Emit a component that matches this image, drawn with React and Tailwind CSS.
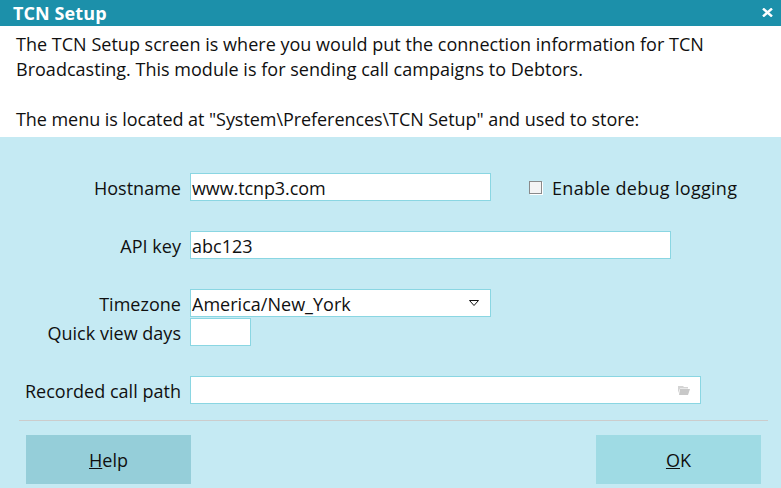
import React from 'react';

function Field({ label, className = '', children }) {
  return (
    <div className={`flex items-center ${className}`}>
      <label className="w-[181px] text-right mr-[9px] pt-[2px] text-[#101010]">{label}</label>
      {children}
    </div>
  );
}

const boxClass = 'h-[28px] bg-white border border-[#8ad6e2] flex items-center pl-[1px] pr-[2px] pt-[2px] text-[#101010]';

export default function App() {
  return (
    <div className="w-[781px] h-[488px] overflow-hidden flex flex-col bg-[#c5eaf3] text-[18px] leading-[25px] font-['Open_Sans','Noto_Sans',sans-serif] tracking-[0.02px]">
      {/* Title bar */}
      <div className="h-[26px] bg-[#1c90aa] flex items-center justify-between pl-[13px] pr-[8px] text-white">
        <span className="font-bold text-[18px] tracking-[0.1px]">TCN Setup</span>
        <svg width="11" height="9" viewBox="0 0 11 9" className="mt-[-2px]">
          <path d="M1 0.5 L10 8.5 M10 0.5 L1 8.5" stroke="#fff" strokeWidth="2.4" />
        </svg>
      </div>

      {/* Description */}
      <div className="h-[111px] bg-white pt-[6px] pl-[16px] text-[#101010]">
        <p>The TCN Setup screen is where you would put the connection information for TCN</p>
        <p>Broadcasting. This module is for sending call campaigns to Debtors.</p>
        <p>&nbsp;</p>
        <p className="tracking-[-0.06px]">The menu is located at "System\Preferences\TCN Setup" and used to store:</p>
      </div>

      {/* Form */}
      <div className="flex-1 flex flex-col pt-[36px]">
        <Field label="Hostname">
          <div className={`${boxClass} w-[301px]`}><span className="tracking-[-0.1px]">www.tcnp3.com</span></div>
          <div className="ml-[38px] w-[13px] h-[13px] bg-[#f4f4f4] border border-[#8a8a8a] shadow-[1px_1px_0_#fff]" />
          <span className="ml-[10px] pt-[2px] tracking-[0.3px] text-[#101010]">Enable debug logging</span>
        </Field>
        <Field label="API key" className="mt-[30px]">
          <div className={`${boxClass} w-[481px]`}>abc123</div>
        </Field>
        <Field label="Timezone" className="mt-[30px]">
          <div className={`${boxClass} w-[301px] justify-between`}>
            <span>America/New_York</span>
            <svg width="10" height="6" viewBox="0 0 10 6" className="mr-[9px] mt-[-2px]">
              <path d="M0.5 0.5 H9.5 L5 5.5 Z" fill="#fff" stroke="#111" strokeWidth="1" />
            </svg>
          </div>
        </Field>
        <Field label="Quick view days" className="mt-[1px]">
          <div className={`${boxClass} w-[61px]`} />
        </Field>
        <Field label="Recorded call path" className="mt-[30px]">
          <div className={`${boxClass} w-[511px] justify-end`}>
            <svg width="12" height="9" viewBox="0 0 12 9" className="mr-[8px] mt-[-2px]">
              <path d="M0 0 H5 L6 1 H10 V2.5 H2 L0 7 Z" fill="#d4d4d4" />
              <path d="M2 3 H12 L10 9 H1 Z" fill="#c8c8c8" />
            </svg>
          </div>
        </Field>

        <div className="h-px bg-[#cccccc] ml-[19px] mr-[13px] mt-[16px]" />

        {/* Buttons */}
        <div className="flex justify-between mt-[14px] ml-[26px] mr-[20px]">
          <button className="w-[165px] h-[49px] pt-[2px] bg-[#95ced9] text-[#101010]"><u>H</u>elp</button>
          <button className="w-[165px] h-[49px] pt-[2px] bg-[#9fdbe4] text-[#101010]"><u>O</u>K</button>
        </div>
      </div>
    </div>
  );
}
